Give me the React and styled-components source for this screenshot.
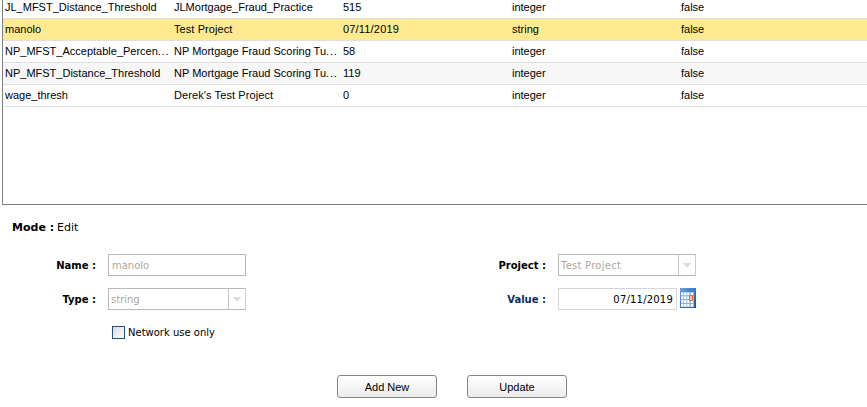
import React from "react";
import styled, { createGlobalStyle } from "styled-components";

const GlobalStyle = createGlobalStyle`
  * { box-sizing: border-box; }
  html, body { margin: 0; background: #fff; overflow: hidden; }
`;

const Page = styled.main`
  width: 867px;
  height: 407px;
  overflow: hidden;
  background: #fff;
  color: #000;
  font-family: "DejaVu Sans", sans-serif;
  font-size: 10px;
`;

const Table = styled.div`
  display: flex;
  flex-direction: column;
  justify-content: flex-start;
  height: 205px;
  margin-left: 2px;
  border-left: 1px solid #7f7f7f;
  border-bottom: 1px solid #7f7f7f;
  overflow: hidden;
`;

const Rows = styled.div`
  margin-top: -3px;
`;

const Row = styled.div`
  display: grid;
  grid-template-columns: repeat(4, 169px) 1fr;
  height: 22px;
  border-bottom: 1px solid #dfdfdf;
  background: ${(p) => (p.$selected ? "#ffea8f" : p.$shaded ? "#f7f7f7" : "#fff")};
`;

const Cell = styled.span`
  padding-left: 2px;
  font: 11px/21px "Liberation Sans", Arial, sans-serif;
  letter-spacing: ${(p) => p.$spacing || 0}px;
  white-space: nowrap;
`;

const Dots = styled.span`
  letter-spacing: 0.8px;
`;

const Mode = styled.div`
  display: flex;
  gap: 3px;
  height: 16px;
  margin: 15px 0 0 12px;
  font-size: 11px;
  line-height: 16px;
`;

const Form = styled.div`
  display: grid;
  grid-template-columns: 96px 402px 48px 1fr;
  grid-template-rows: 22px 22px;
  row-gap: 12px;
  margin-top: 18px;
`;

const Label = styled.label`
  justify-self: end;
  font-weight: bold;
  line-height: 24px;
  white-space: nowrap;
  color: ${(p) => (p.$active ? "#0b2d5e" : "#000")};
`;

const Field = styled.div`
  display: flex;
  gap: 3px;
  margin-left: 12px;
`;

const Input = styled.div`
  width: ${(p) => p.$width}px;
  height: 22px;
  padding: 0 3px;
  border: 1px solid ${(p) => (p.$active ? "#d5d5df" : "#b8b8b8")};
  line-height: 22px;
  color: ${(p) => (p.$active ? "#000" : "#aca899")};
  text-align: ${(p) => (p.$active ? "right" : "left")};
  letter-spacing: ${(p) => p.$spacing || 0}px;
`;

const Combo = styled.div`
  display: flex;
  width: 138px;
  height: 22px;
  border: 1px solid #b8b8b8;
  border-right-color: #cdcdcd;
  color: #aca899;
  line-height: 22px;
`;

const ComboText = styled.span`
  flex: 1;
  padding-left: 2px;
  letter-spacing: ${(p) => p.$spacing || 0}px;
`;

const ComboArrow = styled.span`
  display: grid;
  place-items: center;
  width: 17px;
  border-left: 1px solid #c4c4c4;
`;

const CheckRow = styled.div`
  display: flex;
  align-items: center;
  gap: 3px;
  height: 13px;
  margin: 16px 0 0 112px;
`;

const CheckBox = styled.span`
  width: 13px;
  height: 13px;
  border: 1px solid #1c5180;
  background: linear-gradient(135deg, #dcdcd7, #fff);
`;

const Actions = styled.div`
  display: flex;
  gap: 30px;
  margin: 36px 0 0 337px;
`;

const Button = styled.button`
  width: 100px;
  height: 23px;
  padding: 1px 0 0;
  border: 1px solid #858585;
  border-radius: 3px;
  background: linear-gradient(#fff, #ececec);
  color: #000;
  font: 11px/21px "Liberation Sans", Arial, sans-serif;
`;

const rows = [
  ["JL_MFST_Distance_Threshold", "JLMortgage_Fraud_Practice", "515", "integer", "false"],
  ["manolo", "Test Project", "07/11/2019", "string", "false"],
  ["NP_MFST_Acceptable_Percen...", "NP Mortgage Fraud Scoring Tu...", "58", "integer", "false"],
  ["NP_MFST_Distance_Threshold", "NP Mortgage Fraud Scoring Tu...", "119", "integer", "false"],
  ["wage_thresh", "Derek's Test Project", "0", "integer", "false"],
];

const spacings = { "07/11/2019": 0.18, "Derek's Test Project": 0.1, "Test Project": 0.08 };

const CellText = ({ text }) =>
  text.endsWith("...") ? (
    <>
      {text.slice(0, -3)}
      <Dots>...</Dots>
    </>
  ) : (
    text
  );

const Arrow = () => (
  <ComboArrow>
    <svg width="8" height="4" viewBox="0 0 8 4" shapeRendering="crispEdges">
      <path d="M0 0h8v1H7v1H6v1H5v1H3V3H2V2H1V1H0z" fill="#dcdcdc" />
    </svg>
  </ComboArrow>
);

const CalendarIcon = () => (
  <svg width="16" height="20" viewBox="0 0 16 20">
    <defs>
      <linearGradient id="cal" x1="0" y1="0" x2="1" y2="1">
        <stop offset="0" stopColor="#6ba2dc" />
        <stop offset="0.45" stopColor="#3f7dc6" />
        <stop offset="1" stopColor="#1d559f" />
      </linearGradient>
    </defs>
    <rect width="16" height="20" fill="url(#cal)" />
    <rect x="1" y="4" width="13" height="15" fill="#86addb" />
    <g fill="#fff">
      {[4.5, 8.3, 12.1, 15.9].map((y) =>
        [1, 4.1, 7.2, 10.9].map((x) => (
          <rect key={`${x}-${y}`} x={x} y={y} width="2.3" height="2.8" />
        ))
      )}
    </g>
    <path d="M9.5 7.5h3v5h-3z" fill="#f7c3ae" stroke="#e0683f" />
  </svg>
);

export default function App() {
  return (
    <Page>
      <GlobalStyle />
      <Table>
        <Rows>
          {rows.map((row, i) => (
            <Row key={i} $selected={i === 1} $shaded={i === 3}>
              {row.map((text, j) => (
                <Cell key={j} $spacing={spacings[text]}>
                  <CellText text={text} />
                </Cell>
              ))}
            </Row>
          ))}
        </Rows>
      </Table>
      <Mode>
        <b>Mode :</b>
        <span>Edit</span>
      </Mode>
      <Form>
        <Label>Name :</Label>
        <Field><Input $width={138}>manolo</Input></Field>
        <Label>Project :</Label>
        <Field><Combo><ComboText $spacing={0.25}>Test Project</ComboText><Arrow /></Combo></Field>
        <Label>Type :</Label>
        <Field><Combo><ComboText>string</ComboText><Arrow /></Combo></Field>
        <Label $active>Value :</Label>
        <Field>
          <Input $active $width={119} $spacing={0.2}>07/11/2019</Input>
          <CalendarIcon />
        </Field>
      </Form>
      <CheckRow>
        <CheckBox />
        <span>Network use only</span>
      </CheckRow>
      <Actions>
        <Button>Add New</Button>
        <Button>Update</Button>
      </Actions>
    </Page>
  );
}
